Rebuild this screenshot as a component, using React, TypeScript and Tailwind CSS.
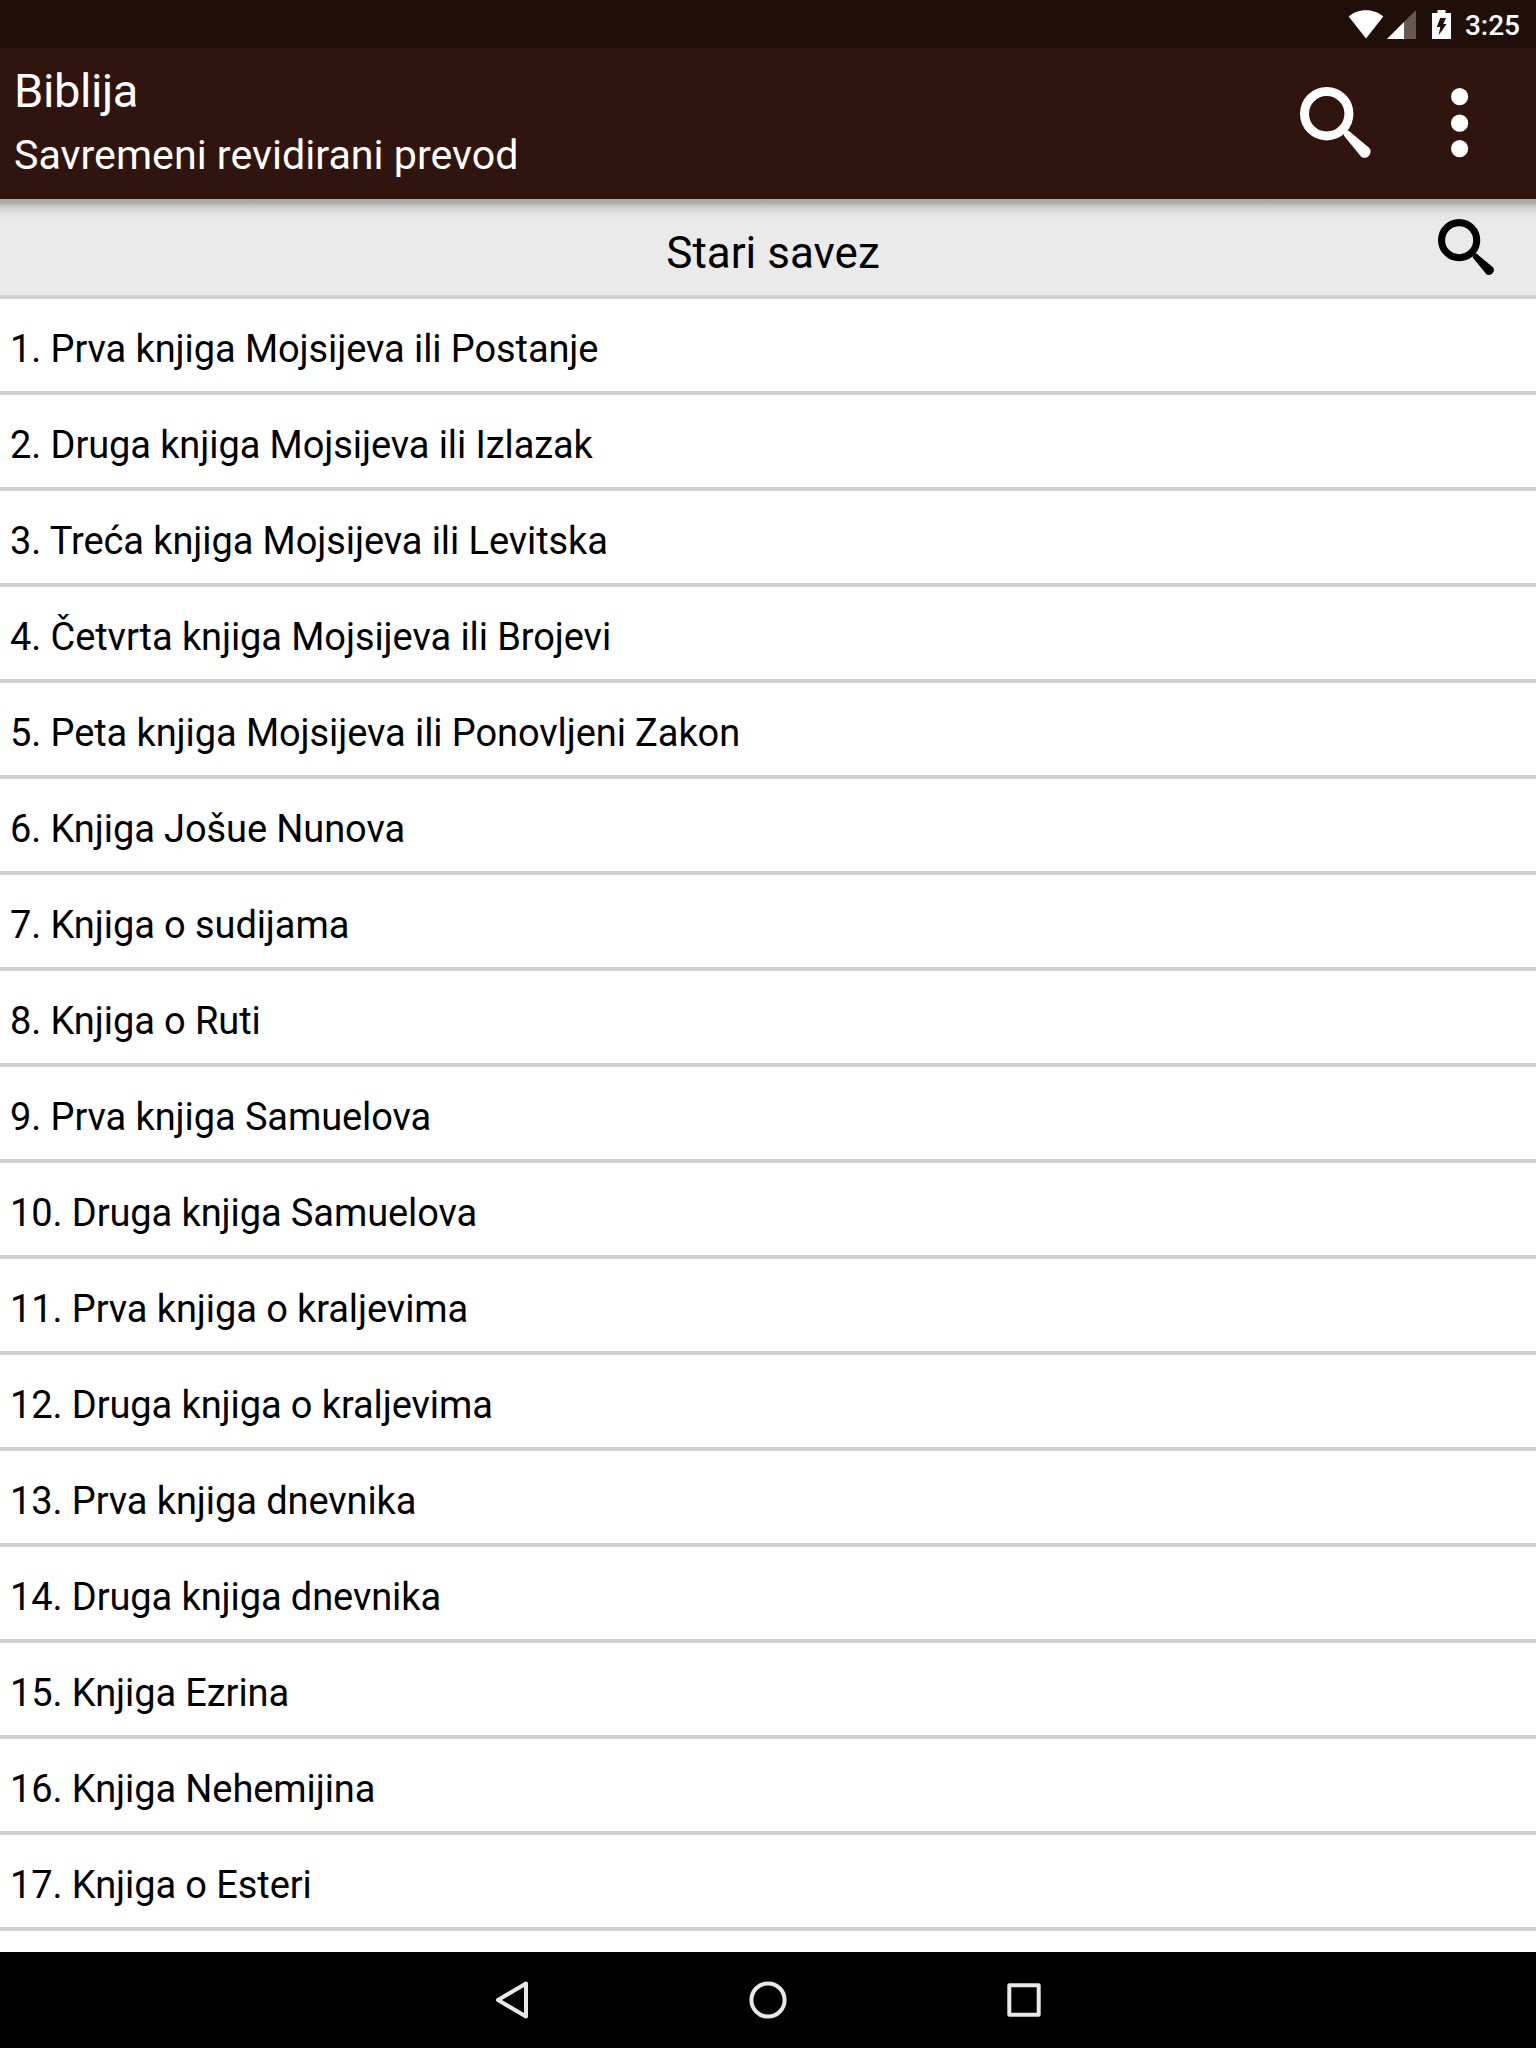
const books = [
  "Prva knjiga Mojsijeva ili Postanje",
  "Druga knjiga Mojsijeva ili Izlazak",
  "Treća knjiga Mojsijeva ili Levitska",
  "Četvrta knjiga Mojsijeva ili Brojevi",
  "Peta knjiga Mojsijeva ili Ponovljeni Zakon",
  "Knjiga Jošue Nunova",
  "Knjiga o sudijama",
  "Knjiga o Ruti",
  "Prva knjiga Samuelova",
  "Druga knjiga Samuelova",
  "Prva knjiga o kraljevima",
  "Druga knjiga o kraljevima",
  "Prva knjiga dnevnika",
  "Druga knjiga dnevnika",
  "Knjiga Ezrina",
  "Knjiga Nehemijina",
  "Knjiga o Esteri",
];

function SearchIcon({ className }: { className: string }) {
  return (
    <svg viewBox="0 0 72 72" className={className} fill="currentColor">
      <circle cx="26.7" cy="26.7" r="22.2" fill="none" stroke="currentColor" strokeWidth="9" />
      <path d="M43.7 46.2 L46.5 43.4 Q47.7 43 49 44 L69.4 61 A6.2 6.2 0 0 1 61.4 70 L44.6 49.5 Q43.2 47.7 43.7 46.2Z" />
    </svg>
  );
}

function StatusBar() {
  return (
    <div className="flex h-12 items-center justify-end bg-[#200f09] pr-4 text-white">
      {/* wifi */}
      <svg viewBox="0 0 36 29" className="mr-[3px] h-[29px] w-9" fill="currentColor">
        <path d="M18 28.5 L0.7 6.5 C5 2.5 11 0.2 18 0.2 S31 2.5 35.3 6.5Z" />
      </svg>
      {/* signal */}
      <svg viewBox="0 0 29 29" className="mr-4 h-[29px] w-[29px]" fill="currentColor">
        <path d="M0 29 L29 0 V29Z" fill="#665855" />
        <path d="M0 29 L17 12 V29Z" />
      </svg>
      {/* battery */}
      <svg viewBox="0 0 19 29" className="mr-[14px] h-[29px] w-[19px]" fill="currentColor">
        <path d="M5.5 0 H13.5 V3 H19 V29 H0 V3 H5.5Z" />
        <path d="M8.2 8 H14 L11.3 14 H14.6 L6.5 25.5 L8.3 17 H4.8Z" fill="#200f09" />
      </svg>
      <span className="pt-[3px] text-[28px] leading-none font-medium">3:25</span>
    </div>
  );
}

function Header() {
  return (
    <div className="flex h-[151px] bg-[#2f150d] pl-[14px] text-white">
      <div className="flex-1 pt-[15px]">
        <h1 className="text-[47px] leading-[56px] tracking-[-0.4px]">Biblija</h1>
        <p className="mt-1 text-[41.2px] leading-[64px]">Savremeni revidirani prevod</p>
      </div>
      <SearchIcon className="mt-[39px] mr-[79px] h-[72px] w-[72px]" />
      <svg viewBox="0 0 18 70" className="mt-10 mr-[67px] h-[70px] w-[18px]" fill="currentColor">
        <circle cx="8.6" cy="8.6" r="8.6" />
        <circle cx="8.6" cy="35.2" r="8.6" />
        <circle cx="8.6" cy="60.6" r="8.6" />
      </svg>
    </div>
  );
}

function NavBar() {
  return (
    <div className="flex h-24 items-center justify-center gap-[216px] bg-black text-[#e8e8e8]">
      <svg viewBox="0 0 40 40" className="h-10 w-10" fill="none" stroke="currentColor" strokeWidth="4" strokeLinejoin="round">
        <path d="M34 3.5 V36.5 L6 20Z" />
      </svg>
      <svg viewBox="0 0 40 40" className="h-10 w-10" fill="none" stroke="currentColor" strokeWidth="4">
        <circle cx="20" cy="20" r="16.6" />
      </svg>
      <svg viewBox="0 0 40 40" className="h-10 w-10" fill="none" stroke="currentColor" strokeWidth="4" strokeLinejoin="round">
        <path d="M5.3 5.3 H34.7 V34.7 H5.3Z" />
      </svg>
    </div>
  );
}

export default function App() {
  return (
    <div className="flex h-[2048px] w-[1536px] flex-col overflow-hidden bg-white font-['Roboto',sans-serif] text-black">
      <StatusBar />
      <Header />

      {/* section title, shaded by the header above it */}
      <div className="flex h-[100px] border-b-4 border-[#d2d2d2] bg-[#eaeaea] bg-[linear-gradient(to_bottom,#aeada5_0px,#a6aea6_4px,#c4c4c2_6px,#d6d6d6_10px,#e5e5e5_16px,#eaeaea_23px)]">
        <h2 className="flex-1 pt-[22px] pl-[108px] text-center text-[44px] leading-[64px]">Stari savez</h2>
        <SearchIcon className="mt-5 mr-[41px] h-[57px] w-[57px]" />
      </div>

      <ul className="flex-1">
        {books.map((book, i) => (
          <li key={book} className="h-24 border-b-4 border-[#d2d2d2] pt-5 pl-[10px] text-[38px] leading-[60px] tracking-[-0.09px]">
            {i + 1}. {book}
          </li>
        ))}
      </ul>

      <NavBar />
    </div>
  );
}
